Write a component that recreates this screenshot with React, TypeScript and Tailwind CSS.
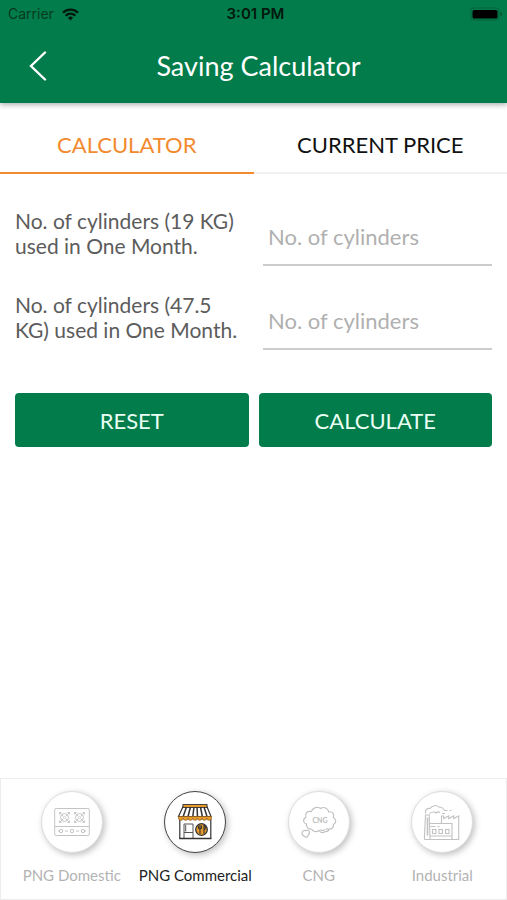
import { useState, type ReactNode } from "react";

const sans = "font-['Lato','Noto_Sans',sans-serif]";

function StatusBar() {
  return (
    <div className="grid h-7 grid-cols-3 items-center pr-1 pl-2 font-['Inter','Roboto',sans-serif] text-sm text-[#03180d]">
      <div className="flex items-center gap-2">
        <span className="text-[#063a20]">Carrier</span>
        <svg width="17" height="13" viewBox="0 0 17 13" fill="none" stroke="currentColor" strokeWidth="2.3" aria-label="Wi-Fi">
          <path d="M1 4.7a10.6 10.6 0 0 1 15 0" />
          <path d="M3.7 7.7a6.8 6.8 0 0 1 9.6 0" />
          <path d="M8.5 12.5 5.9 9.8a3.7 3.7 0 0 1 5.2 0z" fill="currentColor" stroke="none" />
        </svg>
      </div>
      <span className="text-center text-[15px] font-semibold">3:01 PM</span>
      <svg className="justify-self-end" width="33" height="14" viewBox="0 0 33 14" aria-label="Battery full">
        <rect x="1" y="1" width="28" height="12" rx="3" fill="none" stroke="#05623a" />
        <rect x="2.500" y="3" width="25" height="8.500" rx="1.500" fill="#000" />
        <path d="M30.500 5v4c1-.3 1.500-1 1.500-2s-.5-1.700-1.500-2z" fill="#05502d" />
      </svg>
    </div>
  );
}

function StoveIcon() {
  return (
    <svg width="36" height="30" viewBox="0 0 36 30" fill="none" stroke="#c4c4c4">
      <rect x="0.700" y="1.500" width="34.600" height="27" rx="1.500" />
      <path d="M1 19.500h34" />
      {[10.5, 25.5].map((x) => (
        <g key={x}>
          <circle cx={x} cy="10.500" r="4" />
          <circle cx={x} cy="10.500" r="1.200" strokeWidth="0.800" />
          <path d={`M${x - 5} 5.500l3.500 3.500M${x + 5} 5.500l-3.500 3.500M${x - 5} 15.500l3.500-3.500M${x + 5} 15.500l-3.500-3.500`} />
          <path d={`M${x - 5} 7.500v-2h2M${x + 5} 7.500v-2h-2M${x - 5} 13.500v2h2M${x + 5} 13.500v2h-2`} strokeWidth="0.900" />
        </g>
      ))}
      {[7, 18, 29].map((x) => (
        <circle key={x} cx={x} cy="24" r="1.700" />
      ))}
      <path d="M11 24h3M22 24h3M4 24h1M31 24h1" />
    </svg>
  );
}

function ShopIcon() {
  return (
    <svg width="36" height="38" viewBox="0 0 36 38" fill="none" stroke="#333" strokeWidth="1.200">
      <path d="M2.800 16v19.500h31V16" fill="#fff" />
      <path d="M6.500 2.500h23l4.500 11H1.500z" fill="#fff" />
      <rect x="6" y="1.500" width="24" height="3" fill="#e89a2c" strokeWidth="0.900" />
      <path d="m9.500 4-3.300 9.500M13.500 4 11 13.500M17 4l-1.200 9.500M20 4l.5 9.500M23.500 4l1.800 9.500M27 4l3 9.500" strokeWidth="1.500" />
      <path d="M1.500 13.500h33V15a2.350 2.350 0 0 1-4.700 0 2.350 2.350 0 0 1-4.700 0 2.350 2.350 0 0 1-4.700 0 2.350 2.350 0 0 1-4.700 0 2.350 2.350 0 0 1-4.700 0 2.350 2.350 0 0 1-4.700 0 2.350 2.350 0 0 1-4.800 0z" fill="#e89a2c" stroke="#8b5b1d" strokeWidth="0.700" />
      <path d="M7 35.500V21h9v14.500M7 29.500h9M8.700 22v6.500" strokeWidth="1" stroke="#555" />
      <path d="M2.300 35.500h32" strokeWidth="1.500" />
      <circle cx="24.500" cy="26.500" r="5.800" fill="#e89a2c" strokeWidth="1.300" />
      <path d="M23 22v9M21.500 22.500v2.500c0 1 3 1 3 0v-2.500M27 22v9M27 22c2 1 2 4 0 5" strokeWidth="1.100" />
    </svg>
  );
}

function CloudIcon() {
  return (
    <svg width="38" height="34" viewBox="0 0 38 34" fill="none" stroke="#c0c0c0" strokeWidth="1.200">
      <path d="M11.500 24c-3 .5-5.500-1.800-5-4.800-3.500-1-4-5.200-.7-6.700-1-4.500 2-6.800 5.500-5.800C12.500 2.500 17.500 1 20.500 3.500c3.500-2.300 7.500-.3 8.200 3.300 4-.5 6 2.700 4.600 5.700 3.300 2 3.200 5.500.2 7 .5 3.500-2.500 5.200-5 4.200" />
      <path d="M11.500 24c1.500 3 5 3.200 7.500 1.500 1.500 2.500 5 2.800 6.500.5M20.500 24.500c1.500 1.500 3.500 1.300 4.500-.3M25.500 26.500c2 .3 3.300-.8 3.500-2.500M26 23.500c.7.700 1.700.7 2.500.2" />
      <path d="M6.800 32.500C4 31.500 1.800 29.500 2 27.500c.2-1.700 2-2.500 3.500-1.700 1.700-1.300 4.300-.3 4 1.900-.2 1.500-1.200 2.600-2.700 4.800z" />
      <text x="20" y="18" textAnchor="middle" fill="#bcbcbc" stroke="none" fontFamily="Lato, sans-serif" fontWeight="700" fontSize="7">CNG</text>
    </svg>
  );
}

function FactoryIcon() {
  return (
    <svg width="38" height="37" viewBox="0 0 38 37" fill="none" stroke="#c2c2c2" strokeWidth="1.100">
      <path d="M1.500 35.500V31l1-20h3.700l.8 21v3.500" />
      <path d="M4.500 13.500v18" strokeWidth="1.600" />
      <path d="M2.500 9.500c-.7-3.500 1.500-5.500 4.500-5C9 1.500 13.500.5 16 3c3 0 4.500 1.500 5.500 3.500h3M26.500 6.500h2M6.500 9.500c2-1.500 4.500-2 6.500-.5 1-1 2.500-1.500 4-.5M19 9.500h3" />
      <path d="M18.500 19v-7h2.200v2.500l5-2.500v2.500l5-2.500v2.500l5-2.500v23.500H1.500" />
      <path d="M7 19.500h22v16M7 32h22M7.500 22.500h5M14.500 22.500h2" />
      <rect x="9.500" y="25.500" width="3.500" height="4" />
      <rect x="16" y="25.500" width="3.500" height="4" />
      <rect x="22.500" y="25.500" width="3.500" height="4" />
    </svg>
  );
}

const sections: { name: string; icon: ReactNode }[] = [
  { name: "PNG Domestic", icon: <StoveIcon /> },
  { name: "PNG Commercial", icon: <ShopIcon /> },
  { name: "CNG", icon: <CloudIcon /> },
  { name: "Industrial", icon: <FactoryIcon /> },
];

const fields = [
  { id: "small", label: "No. of cylinders (19 KG) used in One Month." },
  { id: "large", label: "No. of cylinders (47.5 KG) used in One Month." },
];

export default function App() {
  const [tab, setTab] = useState("CALCULATOR");
  const [section, setSection] = useState("PNG Commercial");

  return (
    <div className={`flex min-h-screen flex-col bg-white ${sans}`}>
      <header className="z-10 bg-[#027c4a] shadow-[0_2px_5px_rgba(0,0,0,0.3)]">
        <StatusBar />
        <div className="grid h-[75px] grid-cols-[76px_1fr_66px] items-center">
          <button type="button" aria-label="Back" className="flex justify-center text-white">
            <svg width="18" height="30" viewBox="0 0 18 30" fill="none" stroke="currentColor" strokeWidth="2.400" strokeLinecap="round">
              <path d="M16 1.500 2 15l14 13.500" />
            </svg>
          </button>
          <h1 className="text-center text-[27px] leading-8 text-white">Saving Calculator</h1>
        </div>
      </header>

      <nav className="grid grid-cols-2" role="tablist">
        {["CALCULATOR", "CURRENT PRICE"].map((name) => (
          <button
            key={name}
            type="button"
            role="tab"
            aria-selected={tab === name}
            onClick={() => setTab(name)}
            className={`h-[71px] border-b-2 pt-[14px] text-[22px] ${tab === name ? "border-[#f28a30] text-[#f28a30]" : "border-[#f1f1f1] text-[#111]"}`}
          >
            {name}
          </button>
        ))}
      </nav>

      <form className="flex flex-col px-[15px] pt-[34px]" onSubmit={(e) => e.preventDefault()}>
        {fields.map((f) => (
          <div key={f.id} className="mb-[26px] grid grid-cols-2 gap-x-[19px]">
            <label htmlFor={f.id} className="text-[21px] leading-[25px] text-[#5c5c5c]">
              {f.label}
            </label>
            <input
              id={f.id}
              inputMode="numeric"
              placeholder="No. of cylinders"
              className="h-[58px] w-full border-b-2 border-[#cccccc] px-[5px] text-[22px] outline-none placeholder:text-[#b0b0b0]"
            />
          </div>
        ))}
        <div className="mt-[17px] grid grid-cols-2 gap-[10px] text-[22px] text-[#e9fff4]">
          <button type="reset" className="h-[54px] rounded-[4px] bg-[#027c4a]">RESET</button>
          <button type="submit" className="h-[54px] rounded-[4px] bg-[#027c4a]">CALCULATE</button>
        </div>
      </form>

      <footer className="mt-auto grid h-[122px] grid-cols-4 border border-[#ececec] pt-3 pr-[2px] pl-[9px]">
        {sections.map((s) => {
          const active = section === s.name;
          return (
            <button
              key={s.name}
              type="button"
              aria-pressed={active}
              onClick={() => setSection(s.name)}
              className={`flex flex-col items-center gap-3 text-[15px] leading-5 whitespace-nowrap ${active ? "text-[#222]" : "text-[#b3b3b3]"}`}
            >
              <span
                className={`flex size-[62px] items-center justify-center rounded-full border bg-white shadow-[2px_2px_6px_rgba(0,0,0,0.25)] ${active ? "border-[#444]" : "border-[#dedede]"}`}
              >
                {s.icon}
              </span>
              {s.name}
            </button>
          );
        })}
      </footer>
    </div>
  );
}
